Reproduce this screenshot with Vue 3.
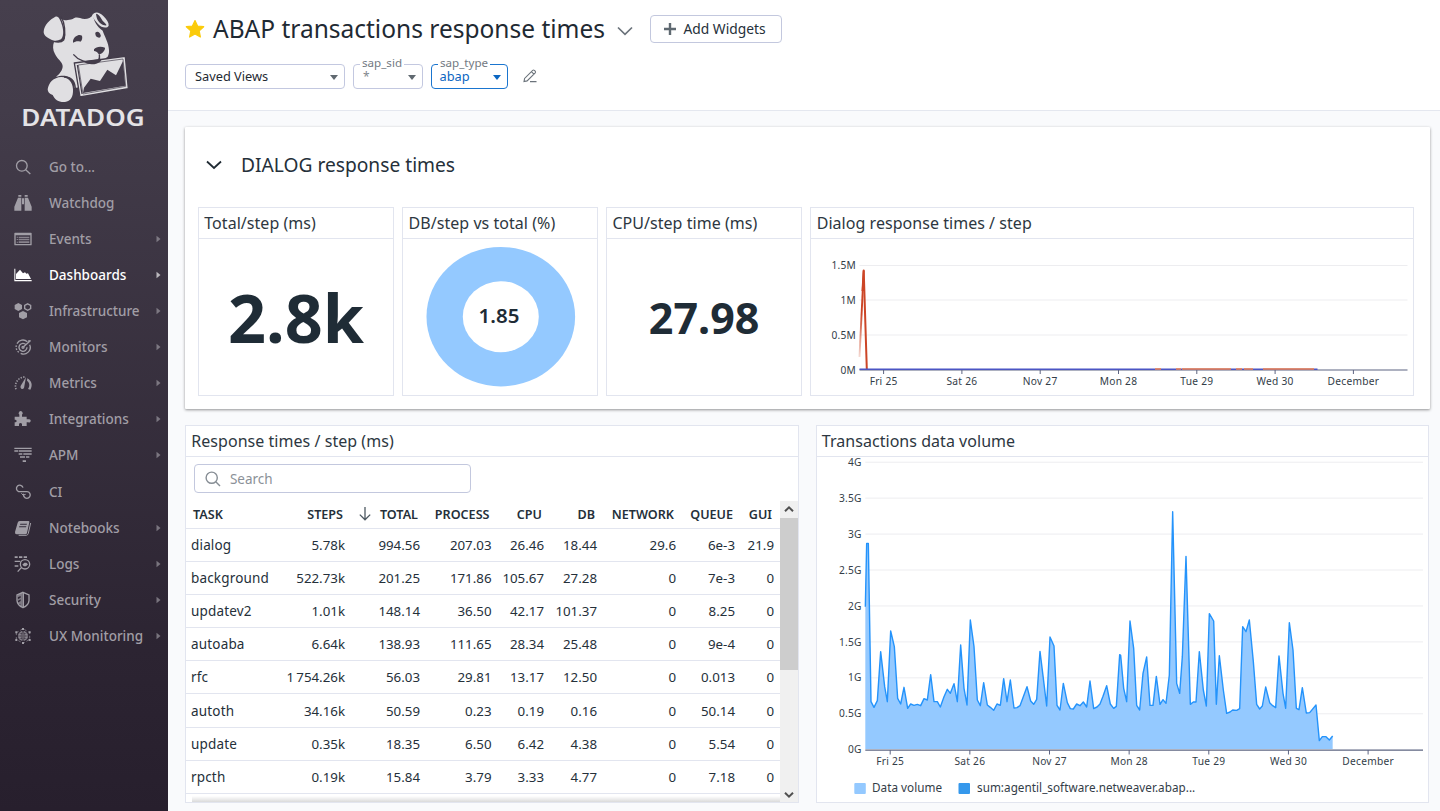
<script setup>
const nav = [
  { id: 'search', label: 'Go to...' },
  { id: 'watchdog', label: 'Watchdog' },
  { id: 'events', label: 'Events', more: true },
  { id: 'dash', label: 'Dashboards', more: true, active: true },
  { id: 'infra', label: 'Infrastructure', more: true },
  { id: 'monitors', label: 'Monitors', more: true },
  { id: 'metrics', label: 'Metrics', more: true },
  { id: 'integrations', label: 'Integrations', more: true },
  { id: 'apm', label: 'APM', more: true },
  { id: 'ci', label: 'CI' },
  { id: 'notebooks', label: 'Notebooks', more: true },
  { id: 'logs', label: 'Logs', more: true },
  { id: 'security', label: 'Security', more: true },
  { id: 'ux', label: 'UX Monitoring', more: true },
]

const heads = ['TASK', 'STEPS', 'TOTAL', 'PROCESS', 'CPU', 'DB', 'NETWORK', 'QUEUE', 'GUI']
const rows = [
  ['dialog', '5.78k', '994.56', '207.03', '26.46', '18.44', '29.6', '6e-3', '21.9'],
  ['background', '522.73k', '201.25', '171.86', '105.67', '27.28', '0', '7e-3', '0'],
  ['updatev2', '1.01k', '148.14', '36.50', '42.17', '101.37', '0', '8.25', '0'],
  ['autoaba', '6.64k', '138.93', '111.65', '28.34', '25.48', '0', '9e-4', '0'],
  ['rfc', '1\u2009754.26k', '56.03', '29.81', '13.17', '12.50', '0', '0.013', '0'],
  ['autoth', '34.16k', '50.59', '0.23', '0.19', '0.16', '0', '50.14', '0'],
  ['update', '0.35k', '18.35', '6.50', '6.42', '4.38', '0', '5.54', '0'],
  ['rpcth', '0.19k', '15.84', '3.79', '3.33', '4.77', '0', '7.18', '0'],
]

const days = ['Fri 25', 'Sat 26', 'Nov 27', 'Mon 28', 'Tue 29', 'Wed 30', 'December']
const dialogTicks = [
  { y: 26.5, label: '1.5M' },
  { y: 61, label: '1M' },
  { y: 96, label: '0.5M' },
  { y: 131, label: '0M' },
]
const volumeTicks = ['4G', '3.5G', '3G', '2.5G', '2G', '1.5G', '1G', '0.5G', '0G']

// Samples in thirds of a pixel, measured from the chart origin.
const samples = [
  [166, 560], [170, 370], [175, 370], [183, 845], [192, 862], [202, 842], [212, 695], [224, 800], [232, 845],
  [242, 633], [253, 680], [263, 835], [272, 852], [282, 802], [293, 865], [302, 852], [312, 856], [322, 853],
  [332, 857], [342, 836], [352, 840], [362, 764], [372, 845], [382, 845], [391, 861], [402, 830], [412, 808],
  [421, 820], [432, 791], [442, 845], [452, 675], [462, 805], [471, 855], [481, 600], [492, 680], [502, 840],
  [511, 857], [521, 788], [532, 855], [541, 862], [551, 871], [561, 852], [571, 856], [581, 776], [591, 845],
  [601, 780], [612, 864], [621, 863], [630, 857], [651, 800], [662, 843], [671, 853], [680, 838], [690, 694],
  [700, 775], [710, 858], [720, 651], [732, 678], [741, 856], [750, 870], [760, 790], [772, 848], [781, 866],
  [790, 867], [800, 852], [810, 857], [820, 846], [830, 861], [840, 783], [851, 866], [861, 861], [870, 852],
  [879, 829], [890, 797], [901, 852], [911, 865], [919, 859], [929, 704], [932, 706], [941, 805], [950, 845],
  [960, 603], [971, 685], [980, 856], [989, 870], [999, 760], [1010, 711], [1020, 856], [1029, 856],
  [1039, 769], [1050, 853], [1059, 839], [1068, 850], [1078, 765], [1088, 275], [1100, 790], [1109, 820],
  [1117, 710], [1128, 409], [1141, 853], [1150, 846], [1158, 846], [1168, 695], [1180, 810], [1189, 858],
  [1198, 581], [1211, 603], [1219, 853], [1228, 707], [1240, 810], [1250, 880], [1260, 876], [1268, 870],
  [1280, 871], [1289, 866], [1298, 620], [1308, 635], [1318, 600], [1330, 725], [1340, 853], [1349, 867],
  [1357, 858], [1367, 801], [1379, 848], [1388, 857], [1397, 863], [1407, 708], [1419, 820], [1427, 865],
  [1438, 608], [1449, 690], [1459, 865], [1467, 869], [1477, 803], [1489, 879], [1499, 878], [1518, 855],
  [1528, 962], [1537, 950], [1548, 950], [1558, 960], [1568, 948],
]
const line = 'M' + samples.map(([x, y]) => `${(x / 3 - 7).toFixed(2)} ${(y / 3 - 37).toFixed(2)}`).join('L')
const area = `${line}V292H48.3Z`
</script>

<template>
  <div class="app">
    <aside class="side">
      <svg class="logo" viewBox="0 0 504 420">
        <g fill="#e0dfe2">
          <path d="M131 95C132 75 150 58 166 50C176 46 181 60 186 75C192 95 190 110 183 118C172 124 160 124 150 117C139 111 131 105 131 95Z" />
          <path d="M183 56C195 63 205 61 218 57C222 52 232 51 240 54C256 60 270 56 280 44C280 62 290 78 308 92C314 110 326 128 327 150C328 168 320 180 304 183C292 190 282 193 270 192L226 190L232 240L237 262L224 264C226 248 214 234 200 229C190 226 178 228 168 231C178 222 188 212 188 198C187 185 172 178 165 162C158 150 158 136 162 126C180 127 192 122 195 115C197 98 192 75 183 56Z" />
          <path d="M276 46C283 33 298 35 310 48C320 58 327 68 326 77C322 86 304 84 294 72C286 64 280 55 276 46Z" />
          <path d="M143 268C146 248 160 232 184 231C205 232 218 245 219 268C220 292 212 304 195 306C175 307 165 299 158 285C148 282 143 276 143 268Z" />
        </g>
        <g fill="#433c4a">
          <path d="M288 41C295 42 300 48 304 56C308 65 317 69 320 76C310 78 298 70 293 60C290 54 289 48 288 41Z" />
          <path d="M219 122C223 108 237 101 246 107C248 115 246 121 241 125C233 122 225 125 219 128Z" />
          <path d="M286 98C292 93 300 96 302 106C303 113 298 114 293 112C288 110 285 103 286 98Z" />
          <path d="M282 148C288 139 304 138 315 143C316 151 307 161 298 163C292 160 294 155 282 153Z" />
        </g>
        <g fill="none" stroke="#433c4a">
          <path stroke-width="4" d="M220 163C233 179 260 193 290 184C300 180 299 172 298 163M300 178C309 181 318 178 323 172M192 231C213 230 224 244 226 264" />
          <path stroke-width="4" d="M183 50C194 68 198 100 191 120C184 128 168 126 160 124" />
        </g>
        <path fill="#e0dfe2" stroke="#433c4a" stroke-width="4" d="M223 189L376 169L385 266L240 291Z" />
        <path fill="none" stroke="#433c4a" stroke-width="3.500" d="M232 195L246 282" />
        <path fill="#433c4a" d="M249 279L252 263L272 236L300 243L322 209L348 226L369 183L376 257Z" />
        <path fill="none" stroke="#433c4a" stroke-width="2" d="M235 195L369 177L377 259L249 282Z" />
        <path fill="#433c4a" d="M253 187C266 196 292 195 304 182L300 178L250 184Z" />
        <text x="64" y="377" textLength="370" lengthAdjust="spacingAndGlyphs" class="brand">DATADOG</text>
      </svg>
      <nav class="nav">
        <div v-for="n in nav" :key="n.id" class="item" :class="{ on: n.active }">
          <svg class="ico" viewBox="0 0 54 54" fill="currentColor">
            <g v-if="n.id === 'search'" fill="none" stroke="currentColor" stroke-width="4">
              <circle cx="23.500" cy="23.500" r="16" />
              <path d="M35 35L49 48" />
            </g>
            <g v-else-if="n.id === 'watchdog'">
              <path d="M13 3H22V8H13ZM32 3H41V8H32ZM12 11H22V50H1V38ZM32 11H42L53 38V50H32ZM24 13H30V31H24Z" />
            </g>
            <g v-else-if="n.id === 'events'">
              <path fill-rule="evenodd" d="M3 8H51Q53 8 53 10V44Q53 46 51 46H3Q1 46 1 44V10Q1 8 3 8ZM5 16V42H49V16Z" />
              <path d="M8 20H12V23H8ZM14 20H46V24H14ZM8 27H12V30H8ZM14 26H46V31H14ZM8 35H12V38H8ZM14 34H46V39H14Z" opacity=".75" />
            </g>
            <g v-else-if="n.id === 'dash'">
              <path d="M1 8H4V42H53V46H1ZM6 39V24L18 11L27 22L33 19L37 23L42 22L51 39Z" />
            </g>
            <g v-else-if="n.id === 'infra'">
              <path d="M13 3L24 9V21L13 27L2 21V9ZM27 27L39 33V46L27 52L15 46V33Z" />
              <path fill="none" stroke="currentColor" stroke-width="4" d="M41 5.500L50 10.500V20L41 25L32 20V10.500Z" />
            </g>
            <g v-else-if="n.id === 'monitors'" fill="none" stroke="currentColor" stroke-width="4">
              <path d="M40 11A20 20 0 0 0 9 17M47 20A20 20 0 0 1 20 46" />
              <path stroke-dasharray="5 4" d="M7 22A20 20 0 0 0 18 45" />
              <path d="M36 20A12 12 0 1 0 39 28M27 28L49 8" />
              <path d="M43 15V8H50" stroke-width="3" />
              <circle cx="27" cy="28" r="3" />
            </g>
            <g v-else-if="n.id === 'metrics'">
              <path fill="none" stroke="currentColor" stroke-width="5" stroke-dasharray="4 4" d="M6 46C0 28 12 10 32 9" />
              <path d="M22 44C18 40 19 36 22 32L36 9L31 37C31 43 27 47 22 44ZM40 13C53 20 57 34 49 47L42 45C49 34 46 25 39 20Z" />
            </g>
            <g v-else-if="n.id === 'integrations'">
              <path d="M2 20H16V14A6 6 0 1 1 24 14V20H38V28H43A5 5 0 1 1 43 37H38V48H24V42A5 5 0 0 0 15 42V48H2V37C10 37 10 29 2 29Z" />
            </g>
            <g v-else-if="n.id === 'apm'">
              <path d="M1 5H53V9H1ZM1 13H12V17H1ZM14 13H53V17H14ZM14 22H25V26H14ZM28 22H53V26H28ZM18 31H33V35H18ZM36 31H46V35H36ZM26 43H36V48H26Z" />
            </g>
            <g v-else-if="n.id === 'ci'" fill="none" stroke="currentColor" stroke-width="4">
              <path d="M27 14A10 10 0 1 0 14 26H39A10 10 0 1 1 30 41L27 32" />
              <path d="M35 34L27 36L22 31" stroke-width="3" />
            </g>
            <g v-else-if="n.id === 'notebooks'">
              <path fill-rule="evenodd" d="M17 6H43Q47 6 46 10L39 42Q38 46 34 46H8Q2 46 3 39L11 11Q12 6 17 6ZM19 14L18 17H38L39 14ZM16 22L15 25H36L37 22Z" />
              <path fill="none" stroke="currentColor" stroke-width="3" d="M50 12L43 43Q42 48 37 49H14" />
            </g>
            <g v-else-if="n.id === 'logs'">
              <path d="M2 4H11V9H2ZM15 4H25V9H15ZM29 4H39V9H29ZM2 17H19V21H2ZM2 31H13V35H2Z" />
              <path fill="none" stroke="currentColor" stroke-width="4" d="M47 28A14 14 0 1 1 19 28A14 14 0 1 1 47 28ZM22 38L11 50" />
              <path d="M25 29L31 23H37L42 28L36 34H30Z" />
            </g>
            <g v-else-if="n.id === 'security'">
              <path fill="none" stroke="currentColor" stroke-width="4" d="M27 4L45 12V29C44 40 37 46 27 50C17 46 10 40 9 29V12Z" />
              <path d="M26 4V50L19 45V38L13 40L11 35L20 30V25L11 30V25L20 20V15L11 19V12Z" opacity=".7" />
              <path d="M26 4H30V50H26Z" />
            </g>
            <g v-else>
              <circle cx="27" cy="27" r="15" opacity=".8" />
              <path fill="none" stroke="#2d2533" stroke-width="1.500" d="M12 27H42M27 12V42M16 18Q27 24 38 18M16 36Q27 30 38 36M27 12Q15 27 27 42Q39 27 27 12" />
              <path fill="none" stroke="currentColor" stroke-width="3" opacity=".6" d="M7 17L27 5L47 17V37L27 49L7 37Z" stroke-dasharray="8 6" />
              <path d="M24 3H30V9H24ZM24 45H30V51H24ZM4 13H10V19H4ZM44 13H50V19H44ZM4 36H10V42H4ZM44 36H50V42H44Z" />
            </g>
          </svg>
          <span class="lbl">{{ n.label }}</span>
          <svg v-if="n.more" class="arr" viewBox="0 0 5 8"><path d="M.5.8L4.500 4L.5 7.200Z" fill="currentColor" /></svg>
        </div>
      </nav>
    </aside>

    <main class="main">
      <header class="head">
        <div class="title-row">
          <svg class="star" viewBox="0 0 20 20"><path fill="#fbcb0a" stroke="#fbcb0a" stroke-width="1.200" stroke-linejoin="round" d="M10 1.500L12.600 7L18.700 7.700L14.200 11.900L15.400 18L10 15L4.600 18L5.800 11.900L1.300 7.700L7.400 7Z" /></svg>
          <h1>ABAP transactions response times</h1>
          <svg class="chev" viewBox="0 0 16 10"><path d="M1 1.500L8 8.300L15 1.500" fill="none" stroke="#6b737b" stroke-width="1.700" /></svg>
          <button class="add">
            <svg viewBox="0 0 14 14"><path d="M7 1V13M1 7H13" stroke="#5f6971" stroke-width="2.400" /></svg>
            Add Widgets
          </button>
        </div>
        <div class="filters">
          <div class="box saved"><span>Saved Views</span><i class="caret"></i></div>
          <div class="box sid"><label>sap_sid</label><span>*</span><i class="caret"></i></div>
          <div class="box type"><label>sap_type</label><span>abap</span><i class="caret"></i></div>
          <svg class="pen" viewBox="0 0 14 14"><path d="M1 12.500L1.600 9.400L9.700 1.300Q10.500.6 11.300 1.300L12.200 2.200Q12.900 3 12.200 3.800L4.100 11.900ZM8.400 2.600L10.900 5.100M7 12.600H13.500" fill="none" stroke="#6b737b" stroke-width="1.100" /></svg>
        </div>
      </header>

      <section class="group">
        <div class="group-title">
          <svg viewBox="0 0 16 10"><path d="M1 1.500L8 8L15 1.500" fill="none" stroke="#1f2a33" stroke-width="1.800" /></svg>
          <h2>DIALOG response times</h2>
        </div>
        <div class="widgets">
          <div class="widget">
            <h3>Total/step (ms)</h3>
            <div class="big">2.8k</div>
          </div>
          <div class="widget">
            <h3>DB/step vs total (%)</h3>
            <div class="donut">
              <svg viewBox="0 0 194 156">
                <ellipse cx="97.800" cy="77.700" rx="74.300" ry="69.700" fill="#94c9ff" />
                <ellipse cx="97.800" cy="77.700" rx="38" ry="35.500" fill="#fff" />
                <text x="96" y="84" text-anchor="middle" class="pct">1.85</text>
              </svg>
            </div>
          </div>
          <div class="widget">
            <h3>CPU/step time (ms)</h3>
            <div class="big mid">27.98</div>
          </div>
          <div class="widget wide">
            <h3>Dialog response times / step</h3>
            <svg class="chart" viewBox="0 0 603 156">
              <defs>
                <linearGradient id="spike" gradientUnits="userSpaceOnUse" x1="0" y1="30" x2="0" y2="118">
                  <stop offset=".5" stop-color="#cc4526" />
                  <stop offset="1" stop-color="#cc4526" stop-opacity=".2" />
                </linearGradient>
              </defs>
              <path d="M48.500 26.500H596.500M48.500 61H596.500M48.500 96H596.500" class="gridline" />
              <text v-for="t in dialogTicks" :key="t.label" x="45" :y="t.y + 3.600" text-anchor="end" class="ax">{{ t.label }}</text>
              <path d="M48.500 118L52.700 31.500" fill="none" stroke="url(#spike)" stroke-width="1.900" />
              <path d="M51.500 52L52.700 31.500L55.800 130" fill="none" stroke="#cc4526" stroke-width="2" stroke-linejoin="round" />
              <path d="M48.500 131H596.500" stroke="#5d6481" stroke-width="1.100" />
              <path d="M48.500 130.200H506.500" stroke="#4b55c4" stroke-width="1.500" />
              <path d="M344 130H350M365 130H370M371 130H420M425 130H431M433 130H442M452 130H503" stroke="#ef8350" stroke-width="1.500" />
              <g v-for="(d, i) in days" :key="d">
                <path :d="`M${72.6 + i * 78.3} 131V135`" stroke="#5d6481" />
                <text :x="72.6 + i * 78.3" y="145.500" text-anchor="middle" class="ax">{{ d }}</text>
              </g>
            </svg>
          </div>
        </div>
      </section>

      <section class="lower">
        <div class="widget panel">
          <h3>Response times / step (ms)</h3>
          <div class="search">
            <svg viewBox="0 0 16 16"><circle cx="6.700" cy="6.700" r="5.600" fill="none" stroke="#868d94" stroke-width="1.400" /><path d="M10.800 10.800L15 15" stroke="#868d94" stroke-width="1.400" /></svg>
            <span>Search</span>
          </div>
          <div class="tbl">
            <div class="body">
              <div class="tr th">
                <div v-for="h in heads" :key="h">
                  <svg v-if="h === 'TOTAL'" viewBox="0 0 12 14"><path d="M6 0V12.500M.8 7.600L6 12.800L11.200 7.600" fill="none" stroke="#4e5962" stroke-width="1.300" /></svg>{{ h }}
                </div>
              </div>
              <div v-for="r in rows" :key="r[0]" class="tr">
                <div v-for="(c, i) in r" :key="i">{{ c }}</div>
              </div>
              <div class="fade"></div>
            </div>
            <div class="scroll">
              <svg viewBox="0 0 18 17"><path d="M5 10.200L9 6.300L13 10.200" fill="none" stroke="#505050" stroke-width="2" /></svg>
              <div class="thumb"></div>
              <svg class="down" viewBox="0 0 18 17"><path d="M5 6.800L9 10.700L13 6.800" fill="none" stroke="#505050" stroke-width="2" /></svg>
            </div>
          </div>
        </div>
        <div class="widget panel">
          <h3>Transactions data volume</h3>
          <svg class="chart" viewBox="0 0 611 345">
            <path v-for="i in 8" :key="i" :d="`M48.300 ${5.200 + (i - 1) * 35.940}H606`" class="gridline" />
            <text v-for="(t, i) in volumeTicks" :key="t" x="44.800" :y="9 + i * 35.900" text-anchor="end" class="ax">{{ t }}</text>
            <path :d="area" fill="#94c9ff" />
            <path :d="line" fill="none" stroke="#2493fb" stroke-width="1.400" stroke-linejoin="round" />
            <path d="M48.300 293.200H606" stroke="#5d6481" stroke-width="1.200" />
            <g v-for="(d, i) in days" :key="d">
              <path :d="`M${73.2 + i * 79.65} 293V297.500`" stroke="#5d6481" />
              <text :x="73.2 + i * 79.65" y="308" text-anchor="middle" class="ax">{{ d }}</text>
            </g>
            <rect x="37.300" y="326" width="11.500" height="11" rx="1" fill="#94c9ff" />
            <text x="55" y="335" class="leg">Data volume</text>
            <rect x="141.500" y="326" width="11.500" height="11" rx="1" fill="#3598ec" />
            <text x="160" y="335" class="leg">sum:agentil_software.netweaver.abap...</text>
          </svg>
        </div>
      </section>
    </main>
  </div>
</template>

<style>
html, body { margin: 0; overflow: hidden; }
</style>

<style scoped>
.app { display: flex; width: 1440px; height: 811px; overflow: hidden; font-family: "Noto Sans", sans-serif; color: #25303a; background: #f9fafc; }
.app * { box-sizing: border-box; }
h1, h2, h3 { margin: 0; font-weight: 400; white-space: nowrap; }
svg { display: block; flex: none; overflow: visible; }

.side { width: 168px; height: 811px; flex: none; background: linear-gradient(#463f4d 0, #433c4a 110px, #2c2432 650px, #271f2d 811px); }
.logo { width: 168px; height: 140px; }
.brand { font-size: 70px; font-weight: 600; fill: #e4e3e6; }
.nav { padding-top: 8.700px; }
.item { display: flex; align-items: center; height: 36.100px; padding-left: 14px; color: #a19ea6; font-size: 13.500px; font-weight: 500; }
.item.on { color: #fff; }
.ico { width: 18px; height: 18px; margin-right: 17px; }
.lbl { flex: 1; white-space: nowrap; }
.arr { width: 5px; height: 8px; margin-right: 7px; opacity: .65; }

.main { width: 1272px; }
.head { height: 111px; background: #fff; border-bottom: 1px solid #e4e7ef; padding: 14px 0 0 17px; }
.title-row { display: flex; align-items: center; height: 30px; }
.star { width: 20px; height: 20px; margin-right: 8px; }
h1 { width: 404px; font-size: 24.500px; line-height: 30px; color: #1f2a33; }
.chev { width: 16px; height: 10px; margin-top: 3px; }
.add { display: flex; align-items: center; width: 132px; height: 28px; margin: 0 0 0 17px; padding: 0 0 1px 12px; border: 1px solid #c3c8de; border-radius: 4px; background: #fff; font: 13.800px "Noto Sans", sans-serif; color: #25303a; white-space: nowrap; }
.add svg { width: 14px; height: 14px; margin-right: 6.500px; }
.filters { display: flex; margin-top: 20px; }
.box { position: relative; height: 24.500px; border: 1px solid #c3c8e0; border-radius: 4px; background: #fff; font-size: 12.800px; line-height: 23px; padding-left: 9px; color: #1f2a33; }
.box label { position: absolute; left: 6px; top: -9px; height: 14px; padding: 0 2px; background: #fff; font-size: 11.600px; line-height: 14px; color: #737a82; }
.caret { position: absolute; right: 6px; top: 10px; border: 4.500px solid transparent; border-top: 5px solid #606970; border-bottom: 0; }
.saved { width: 160px; margin-right: 8px; }
.sid { width: 70px; margin-right: 8px; color: #82888e; }
.sid span { font-size: 12px; }
.type { width: 77px; border-color: #1a75cf; color: #0b66c2; padding-left: 7.500px; }
.type .caret { border-top-color: #0b66c2; }
.pen { width: 14px; height: 14px; margin: 5px 0 0 15px; }

.group { width: 1245px; height: 282px; margin: 15.500px 0 0 17px; background: #fff; border-radius: 1px; box-shadow: 0 1px 3px rgba(0, 0, 0, .42); padding: 0 0 0 13px; }
.group-title { display: flex; align-items: center; height: 80.500px; padding-left: 8px; padding-bottom: 4px; }
.group-title svg { width: 16px; height: 10px; margin-right: 19px; }
h2 { font-size: 19.200px; color: #25303a; }
.widgets { display: grid; grid-template-columns: 196px 195.500px 196px 604px; gap: 8.300px; height: 189px; }
.widget { border: 1.300px solid #e2e5ef; background: #fff; min-width: 0; overflow: hidden; }
h3 { height: 31px; border-bottom: 1.300px solid #e2e5ef; padding-left: 5.300px; font-size: 16px; line-height: 31px; letter-spacing: .04px; color: #2d3741; }
.big { height: 156px; text-align: center; font-size: 66.500px; line-height: 156px; font-weight: 700; color: #1f2c36; }
.mid { font-size: 43px; padding-top: 1px; }
.pct { font-size: 20.500px; font-weight: 600; fill: #1f2c36; }
.donut svg { width: 194px; height: 156px; }
.wide .chart { width: 603px; height: 156px; }
.gridline { stroke: #ededf0; stroke-width: 1; fill: none; }
.ax { font-size: 10.200px; letter-spacing: .25px; fill: #333d48; }
.leg { font-size: 11.700px; letter-spacing: .04px; fill: #333d48; }

.lower { display: grid; grid-template-columns: 614px 613.500px; gap: 16.500px; margin: 16.500px 0 0 17px; height: 378px; }
.panel { height: 378px; }
.panel .chart { width: 611px; height: 345px; }
.search { display: flex; align-items: center; width: 277px; height: 29px; margin: 7px 0 0 8.400px; border: 1px solid #c3c8de; border-radius: 4px; padding-left: 10px; font-size: 13.500px; color: #8b9198; }
.search svg { width: 16px; height: 16px; margin-right: 8.500px; }
.tbl { display: flex; height: 310px; margin-top: 8px; }
.body { position: relative; width: 593.500px; height: 302px; overflow: hidden; }
.tr { display: grid; grid-template-columns: 99.500px 59.500px 75px 71.500px 52.500px 53px 79px 59px 39px; height: 33.200px; align-items: center; border-bottom: 1px solid #e2e5ef; font-size: 13.300px; white-space: nowrap; color: #25303a; }
.tr > div { display: flex; justify-content: flex-end; align-items: center; }
.tr > div:first-child { justify-content: flex-start; padding-left: 5px; font-size: 13.500px; letter-spacing: .17px; }
.tr.th { height: 27.500px; font-size: 12.600px; font-weight: 600; }
.tr.th > div { padding-right: 2px; }
.tr.th > div:first-child { padding-left: 7px; font-size: 12.600px; letter-spacing: 0; }
.th svg { width: 12px; height: 14px; margin-right: 9px; }
.fade { position: absolute; left: 6px; right: 0; bottom: 0; height: 7px; background: linear-gradient(rgba(0, 0, 0, 0), rgba(0, 0, 0, .17)); }
.scroll { width: 18px; height: 302px; background: #f0f0f0; }
.scroll svg { width: 18px; height: 17px; }
.thumb { height: 151.500px; background: #cdcdcd; }
.scroll .down { margin-top: 116px; }
</style>
